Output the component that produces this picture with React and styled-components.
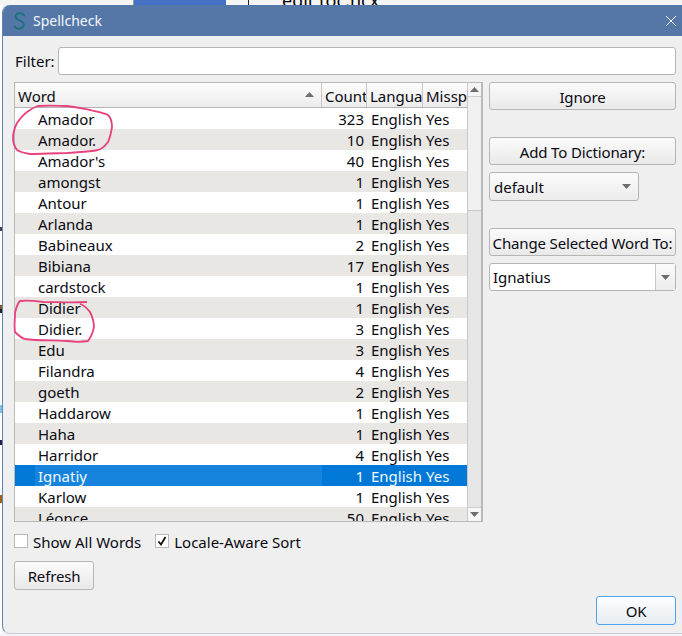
import React from 'react';
import styled, { createGlobalStyle } from 'styled-components';

const GlobalStyle = createGlobalStyle`
  html, body {
    margin: 0;
    padding: 0;
    background: #f4f4f4;
  }
  * {
    box-sizing: border-box;
  }
`;

const Page = styled.div`
  position: relative;
  width: 682px;
  height: 636px;
  overflow: hidden;
  display: flex;
  flex-direction: column;
  background: #f4f4f4;
  color: #0a0a12;
  font-family: "Noto Sans", "Open Sans", sans-serif;
  font-size: 15px;
`;

/* bits of the app behind the dialog */
const BehindTop = styled.div`
  height: 5px;
  flex: none;
  display: flex;
  overflow: hidden;
  padding-left: 133px;
`;

const BehindBlue = styled.div`
  width: 93px;
  background: #4472c4;
  border-left: 1px solid #9a9a9a;
`;

const BehindLine = styled.div`
  width: 1px;
  margin-left: 22px;
  background: #222;
`;

const BehindText = styled.div`
  margin: -11px 0 0 33px;
  font-size: 18px;
  line-height: 22px;
  white-space: nowrap;
  color: #000;
`;

const Lower = styled.div`
  flex: 1;
  display: flex;
  min-height: 0;
  padding-bottom: 2px;
`;

const BehindLeft = styled.div`
  width: 2px;
  flex: none;
  background: linear-gradient(
    to bottom,
    #fff 0 222px,
    #444 222px 226px,
    #fff 226px 300px,
    #8a5a20 300px 304px,
    #223 304px 308px,
    #fff 308px 400px,
    #7fc0e8 400px 408px,
    #fff 408px 435px,
    #224 435px 440px,
    #fff 440px 490px,
    #a06020 490px 498px,
    #fff 498px
  );
`;

const Window = styled.div`
  flex: 1;
  min-width: 0;
  display: flex;
  flex-direction: column;
  background: #efefef;
  border-left: 1px solid #5f86bb;
  border-bottom: 1px solid #c4cedd;
  border-radius: 8px 0 0 8px;
  overflow: hidden;
`;

const TitleBar = styled.div`
  height: 31px;
  flex: none;
  display: flex;
  align-items: center;
  padding: 0 5px 0 10px;
  background: #5577a8;
  color: #fff;
`;

const TitleText = styled.span`
  margin-left: 7px;
  font-size: 14px;
  flex: 1;
  color: #f4f7fb;
`;

const Body = styled.div`
  flex: 1;
  display: flex;
  flex-direction: column;
  padding: 11px 6px 0 11px;
`;

const FilterRow = styled.div`
  display: flex;
  align-items: center;
  height: 28px;
  margin-bottom: 7px;
  padding-left: 1px;
`;

const FilterLabel = styled.span`
  flex: 0 0 43px;
`;

const FilterInput = styled.div`
  flex: 1;
  height: 28px;
  background: #fff;
  border: 1px solid #b5b5b5;
  border-radius: 3px;
`;

const Main = styled.div`
  display: flex;
  gap: 6px;
`;

const Table = styled.div`
  width: 469px;
  height: 440px;
  display: flex;
  border: 1px solid #b9b9b9;
  border-right-width: 2px;
  background: #fff;
`;

const TableMain = styled.div`
  width: 453px;
  flex: none;
  overflow: hidden;
  border-right: 1px solid #c8c8c8;
`;

const HeaderRow = styled.div`
  display: flex;
  height: 25px;
  border-bottom: 1px solid #b4b4b4;
  background: linear-gradient(to bottom, #fdfdfd, #ececec);
`;

const HeaderCell = styled.div`
  position: relative;
  flex: ${(p) => (p.$width ? `0 0 ${p.$width}px` : '1')};
  padding-left: 3px;
  line-height: 26px;
  white-space: nowrap;
  overflow: hidden;
  border-right: ${(p) => (p.$last ? 'none' : '1px solid #c6c6c6')};
`;

const SortArrow = styled.svg`
  position: absolute;
  right: 7px;
  top: 9px;
`;

const Row = styled.div`
  display: flex;
  height: 21px;
  line-height: 23px;
  white-space: nowrap;
  background: ${(p) => (p.$selected ? '#0078d7' : p.$odd ? '#e8e7e3' : '#fff')};
  color: ${(p) => (p.$selected ? '#f2f8fd' : 'inherit')};
`;

const WordCell = styled.div`
  flex: 1;
  margin-left: 20px;
  padding-left: 3px;
  background: ${(p) => (p.$selected ? '#1684dc' : 'transparent')};
`;

const CountCell = styled.div`
  flex: 0 0 45px;
  padding-right: 3px;
  text-align: right;
`;

const LangCell = styled.div`
  flex: 0 0 56px;
  padding-left: 4px;
`;

const MissCell = styled.div`
  flex: 0 0 44px;
  padding-left: 3px;
`;

const Scrollbar = styled.div`
  flex: 1;
  display: flex;
  flex-direction: column;
  background: #e6e6e6;
`;

const ScrollButton = styled.div`
  height: 14px;
  flex: none;
  display: flex;
  align-items: center;
  justify-content: center;
  background: #f6f6f6;
  border-bottom: ${(p) => (p.$up ? '1px solid #d0d0d0' : 'none')};
  border-top: ${(p) => (p.$up ? 'none' : '1px solid #d0d0d0')};
`;

const ScrollThumb = styled.div`
  height: 114px;
  flex: none;
  background: #f0f0f0;
  border-bottom: 1px solid #c8c8c8;
`;

const ScrollTrack = styled.div`
  flex: 1;
`;

const Side = styled.div`
  flex: 1;
  display: flex;
  flex-direction: column;
  gap: 27px;
`;

const SideGroup = styled.div`
  display: flex;
  flex-direction: column;
  gap: 7px;
`;

const Button = styled.div`
  height: ${(p) => p.$height || 28}px;
  width: ${(p) => (p.$width ? `${p.$width}px` : 'auto')};
  display: flex;
  align-items: center;
  justify-content: center;
  padding-top: 1px;
  letter-spacing: -0.15px;
  white-space: nowrap;
  border: 1px solid ${(p) => (p.$focus ? '#4ea6f0' : '#b5b5b5')};
  border-radius: 3px;
  background: ${(p) =>
    p.$focus
      ? 'linear-gradient(to bottom, #fdfeff, #e6ecf1)'
      : 'linear-gradient(to bottom, #fbfbfb, #e9e9e9)'};
`;

const Combo = styled.div`
  height: ${(p) => p.$height}px;
  width: ${(p) => (p.$width ? `${p.$width}px` : 'auto')};
  display: flex;
  align-items: center;
  border: 1px solid #b5b5b5;
  border-radius: 3px;
  background: ${(p) => (p.$editable ? '#fff' : 'linear-gradient(to bottom, #fbfbfb, #ececec)')};
`;

const ComboText = styled.span`
  flex: 1;
  padding-left: ${(p) => (p.$editable ? 3 : 4)}px;
`;

const ComboArrow = styled.div`
  width: ${(p) => (p.$editable ? 20 : 24)}px;
  align-self: stretch;
  display: flex;
  align-items: center;
  justify-content: center;
  border-left: ${(p) => (p.$editable ? '1px solid #c8c8c8' : 'none')};
  background: ${(p) => (p.$editable ? 'linear-gradient(to bottom, #fbfbfb, #ececec)' : 'none')};
`;

const CheckRow = styled.div`
  display: flex;
  align-items: center;
  height: 14px;
  margin-top: 12px;
`;

const CheckBox = styled.div`
  width: 14px;
  height: 14px;
  display: flex;
  align-items: center;
  justify-content: center;
  background: #fff;
  border: 1px solid #b8b8b8;
  margin-left: ${(p) => p.$offset || 0}px;
`;

const CheckLabel = styled.span`
  margin-left: 5px;
  padding-top: 1px;
`;

const RefreshRow = styled.div`
  margin-top: 13px;
`;

const Footer = styled.div`
  display: flex;
  justify-content: flex-end;
  margin-top: 6px;
`;

const Annotations = styled.svg`
  position: absolute;
  left: 0;
  top: 0;
  pointer-events: none;
`;

const words = [
  ['Amador', 323],
  ['Amador.', 10],
  ["Amador's", 40],
  ['amongst', 1],
  ['Antour', 1],
  ['Arlanda', 1],
  ['Babineaux', 2],
  ['Bibiana', 17],
  ['cardstock', 1],
  ['Didier', 1],
  ['Didier.', 3],
  ['Edu', 3],
  ['Filandra', 4],
  ['goeth', 2],
  ['Haddarow', 1],
  ['Haha', 1],
  ['Harridor', 4],
  ['Ignatiy', 1],
  ['Karlow', 1],
  ['Léonce', 50],
];

const Triangle = ({ up, color = '#6e6e6e' }) => (
  <svg width="9" height="5" viewBox="0 0 9 5">
    <path d={up ? 'M0 5 L4.5 0 L9 5 Z' : 'M0 0 L4.5 5 L9 0 Z'} fill={color} />
  </svg>
);

function App() {
  return (
    <Page>
      <GlobalStyle />
      <BehindTop>
        <BehindBlue />
        <BehindLine />
        <BehindText>edit toc.ncx</BehindText>
      </BehindTop>
      <Lower>
        <BehindLeft />
        <Window>
          <TitleBar>
            {/* program logo */}
            <svg width="13" height="18" viewBox="0 0 13 18" fill="none">
              <path
                d="M11 3.5 C10 1.5 6.5 0.8 4.2 1.8 C1.8 3 2 5.8 4.5 7.2 L8.6 9.5 C11.4 11.2 11.4 14.6 8.6 16 C6 17.2 2.6 16.6 1.4 14.6"
                stroke="#1f6f7d"
                strokeWidth="2"
                strokeLinecap="round"
              />
              <path d="M4.5 3.5 C6 3 8 3.4 8.6 5 M8 13.5 C6.5 14 4.6 13.6 4 12.4" stroke="#2f8a96" strokeWidth="1" />
            </svg>
            <TitleText>Spellcheck</TitleText>
            <svg width="12" height="12" viewBox="0 0 12 12">
              <path d="M1 1 L11 11 M11 1 L1 11" stroke="#fff" strokeWidth="1" />
            </svg>
          </TitleBar>
          <Body>
            <FilterRow>
              <FilterLabel>Filter:</FilterLabel>
              <FilterInput />
            </FilterRow>
            <Main>
              <Table>
                <TableMain>
                  <HeaderRow>
                    <HeaderCell>
                      Word
                      <SortArrow width="9" height="5" viewBox="0 0 9 5">
                        <path d="M0 5 L4.5 0 L9 5 Z" fill="#6e6e6e" />
                      </SortArrow>
                    </HeaderCell>
                    <HeaderCell $width={45}>Count</HeaderCell>
                    <HeaderCell $width={56}>Langua</HeaderCell>
                    <HeaderCell $width={44} $last>Missp</HeaderCell>
                  </HeaderRow>
                  {words.map(([word, count], i) => (
                    <Row key={word} $odd={i % 2 === 1} $selected={word === 'Ignatiy'}>
                      <WordCell $selected={word === 'Ignatiy'}>{word}</WordCell>
                      <CountCell>{count}</CountCell>
                      <LangCell>English</LangCell>
                      <MissCell>Yes</MissCell>
                    </Row>
                  ))}
                </TableMain>
                <Scrollbar>
                  <ScrollButton $up>
                    <Triangle up />
                  </ScrollButton>
                  <ScrollThumb />
                  <ScrollTrack />
                  <ScrollButton>
                    <Triangle />
                  </ScrollButton>
                </Scrollbar>
              </Table>
              <Side>
                <Button>Ignore</Button>
                <SideGroup>
                  <Button>Add To Dictionary:</Button>
                  <Combo $height={29} $width={150}>
                    <ComboText>default</ComboText>
                    <ComboArrow>
                      <Triangle />
                    </ComboArrow>
                  </Combo>
                </SideGroup>
                <SideGroup>
                  <Button>Change Selected Word To:</Button>
                  <Combo $height={28} $editable>
                    <ComboText $editable>Ignatius</ComboText>
                    <ComboArrow $editable>
                      <Triangle />
                    </ComboArrow>
                  </Combo>
                </SideGroup>
              </Side>
            </Main>
            <CheckRow>
              <CheckBox />
              <CheckLabel>Show All Words</CheckLabel>
              <CheckBox $offset={14}>
                <svg width="10" height="10" viewBox="0 0 10 10" fill="none">
                  <path d="M1.5 5.5 L4 8.5 L8.5 1" stroke="#111" strokeWidth="1.8" />
                </svg>
              </CheckBox>
              <CheckLabel>Locale-Aware Sort</CheckLabel>
            </CheckRow>
            <RefreshRow>
              <Button $width={80} $height={29}>Refresh</Button>
            </RefreshRow>
            <Footer>
              <Button $width={80} $height={29} $focus>OK</Button>
            </Footer>
          </Body>
        </Window>
      </Lower>
      {/* hand drawn pink marks on top of the list */}
      <Annotations width="682" height="636" viewBox="0 0 682 636" fill="none">
        <path
          d="M38 106 C50 105 60 106 67 106 C76 107 84 109 90 110 C98 112 104 113 108 115 C112 119 112 123 112 127 C111 133 110 138 108 142 C105 146 102 149 98 150 C88 152 78 152 67 153 C54 153 42 154 30 154 C24 153 20 152 17 150 C14 146 13 142 13 138 C13 132 15 127 17 123 C21 117 25 113 30 110 C33 108 35 107 38 106 Z"
          stroke="#e8417f"
          strokeWidth="1.8"
        />
        <path
          d="M87 302 C72 303 58 302 43 302 C35 301 27 300 20 301 C17 304 16 309 15 313 C15 320 14 326 15 332 C18 335 21 338 25 339 C38 341 52 340 67 341 C74 342 82 342 88 341 C91 337 93 332 94 327 C94 321 92 316 90 312 C87 308 84 305 80 304"
          stroke="#e8417f"
          strokeWidth="1.8"
        />
      </Annotations>
    </Page>
  );
}

export default App;
